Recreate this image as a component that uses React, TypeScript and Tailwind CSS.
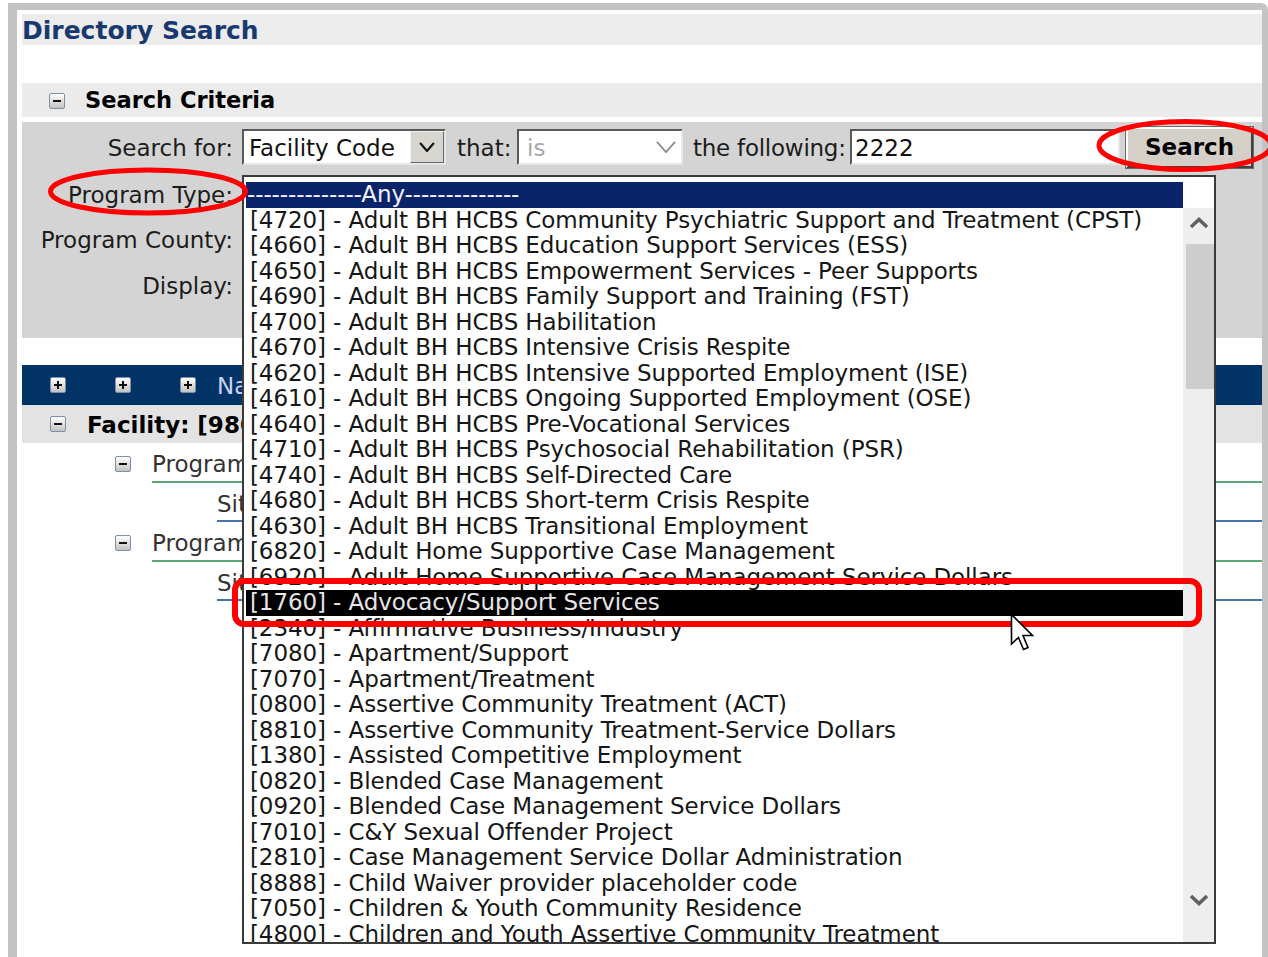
import React from "react";

const programTypes: string[] = [
  "[4720] - Adult BH HCBS Community Psychiatric Support and Treatment (CPST)",
  "[4660] - Adult BH HCBS Education Support Services (ESS)",
  "[4650] - Adult BH HCBS Empowerment Services - Peer Supports",
  "[4690] - Adult BH HCBS Family Support and Training (FST)",
  "[4700] - Adult BH HCBS Habilitation",
  "[4670] - Adult BH HCBS Intensive Crisis Respite",
  "[4620] - Adult BH HCBS Intensive Supported Employment (ISE)",
  "[4610] - Adult BH HCBS Ongoing Supported Employment (OSE)",
  "[4640] - Adult BH HCBS Pre-Vocational Services",
  "[4710] - Adult BH HCBS Psychosocial Rehabilitation (PSR)",
  "[4740] - Adult BH HCBS Self-Directed Care",
  "[4680] - Adult BH HCBS Short-term Crisis Respite",
  "[4630] - Adult BH HCBS Transitional Employment",
  "[6820] - Adult Home Supportive Case Management",
  "[6920] - Adult Home Supportive Case Management Service Dollars",
  "[1760] - Advocacy/Support Services",
  "[2340] - Affirmative Business/Industry",
  "[7080] - Apartment/Support",
  "[7070] - Apartment/Treatment",
  "[0800] - Assertive Community Treatment (ACT)",
  "[8810] - Assertive Community Treatment-Service Dollars",
  "[1380] - Assisted Competitive Employment",
  "[0820] - Blended Case Management",
  "[0920] - Blended Case Management Service Dollars",
  "[7010] - C&Y Sexual Offender Project",
  "[2810] - Case Management Service Dollar Administration",
  "[8888] - Child Waiver provider placeholder code",
  "[7050] - Children & Youth Community Residence",
  "[4800] - Children and Youth Assertive Community Treatment",
];

const SELECTED = "[1760] - Advocacy/Support Services";

function Toggle({ plus }: { plus?: boolean }) {
  return (
    <span className="inline-flex w-[16px] h-[16px] shrink-0 items-center justify-center rounded-[2px] border border-[#7d90a8] bg-linear-to-b from-[#ffffff] to-[#c3c3c3]">
      <svg width="10" height="10" viewBox="0 0 10 10">
        <rect x="1" y="4" width="8" height="2" fill="#111" />
        {plus && <rect x="4" y="1" width="2" height="8" fill="#111" />}
      </svg>
    </span>
  );
}

function Chevron({ color, w, h, sw }: { color: string; w: number; h: number; sw: number }) {
  return (
    <svg width={w} height={h} viewBox={`0 0 ${w} ${h}`}>
      <polyline
        points={`${sw / 2},${sw / 2} ${w / 2},${h - sw / 2} ${w - sw / 2},${sw / 2}`}
        fill="none"
        stroke={color}
        strokeWidth={sw}
      />
    </svg>
  );
}

function ChevronUp() {
  return (
    <svg width="20" height="12" viewBox="0 0 20 12">
      <polyline points="2,10 10,2.5 18,10" fill="none" stroke="#606060" strokeWidth="3.5" />
    </svg>
  );
}

function ChevronDown() {
  return (
    <svg width="20" height="12" viewBox="0 0 20 12">
      <polyline points="2,2 10,9.5 18,2" fill="none" stroke="#606060" strokeWidth="3.5" />
    </svg>
  );
}

function ProgramTypeList() {
  return (
    <div className="absolute left-[242px] top-[175px] w-[974px] h-[769px] border-2 border-[#3a3a3a] bg-white pt-[5px] pl-[2px] pr-0 flex flex-col overflow-hidden text-[23px] tracking-[-0.1px]">
      <div className="w-[937px] h-[25.5px] shrink-0 bg-[#0a246a] text-[#f0f0ff] leading-[25.5px] pl-[1px] whitespace-nowrap overflow-hidden">
        --------------Any--------------
      </div>
      <div className="flex flex-1 min-h-0">
        <div className="w-[937px] flex flex-col">
          {programTypes.map((label) => {
            const on = label === SELECTED;
            return (
              <div
                key={label}
                className={
                  on
                    ? "h-[25.5px] shrink-0 bg-black text-[#e6e6e6] leading-[25.5px] pl-[4px] whitespace-nowrap overflow-hidden"
                    : "h-[25.5px] shrink-0 text-[#161616] leading-[25.5px] pl-[4px] whitespace-nowrap overflow-hidden"
                }
              >
                {label}
              </div>
            );
          })}
        </div>
        <div className="w-[31px] bg-[#eeeeee] flex flex-col items-stretch">
          <div className="h-[30px] flex items-center justify-center">
            <ChevronUp />
          </div>
          <div className="mt-[6px] ml-[3px] h-[145px] bg-[#cdcdcd]" />
          <div className="flex-1" />
          <div className="h-[30px] mb-[27px] flex items-center justify-center">
            <ChevronDown />
          </div>
        </div>
      </div>
    </div>
  );
}

function Annotations() {
  return (
    <svg className="absolute inset-0 pointer-events-none" width="1268" height="957" viewBox="0 0 1268 957">
      <ellipse cx="148" cy="191.5" rx="97.5" ry="21.5" fill="none" stroke="#ff0000" strokeWidth="5" />
      <ellipse cx="1185" cy="145.5" rx="86" ry="24" fill="none" stroke="#ff0000" strokeWidth="5" />
      <rect x="235" y="581" width="964" height="43" rx="9" fill="none" stroke="#ff0000" strokeWidth="6" />
    </svg>
  );
}

function Pointer() {
  return (
    <svg className="absolute left-[1010px] top-[613px] pointer-events-none" width="26" height="42" viewBox="0 0 26 42">
      <path
        d="M1.5 1.5 V31 L8.5 24.5 L13.5 36.5 L18 34.5 L13 22.5 L22.5 22.5 Z"
        fill="#ffffff"
        stroke="#000000"
        strokeWidth="1.6"
        strokeLinejoin="miter"
      />
    </svg>
  );
}

export default function App() {
  return (
    <div className="relative w-[1268px] h-[957px] overflow-hidden bg-white pl-[8px] pt-[3px] font-['DejaVu_Sans',sans-serif] text-[#1c1c1c]">
      <div className="w-[1260px] h-[954px] border-l-[9px] border-t-[7px] border-r-[6px] border-[#c3c3c3] rounded-tr-[7px] pl-[5px] pt-[4px] flex flex-col">
        {/* page title */}
        <div className="h-[31px] bg-[#ececec] flex items-center pt-[2px]">
          <span className="text-[25px] font-bold text-[#18396f] leading-none">Directory Search</span>
        </div>

        {/* criteria header */}
        <div className="mt-[38px] h-[34px] bg-[#ebebeb] flex items-center pl-[27px] pt-[2px]">
          <Toggle />
          <span className="ml-[20px] text-[22.5px] font-bold text-black">Search Criteria</span>
        </div>

        {/* criteria form */}
        <div className="mt-[5px] h-[216px] bg-[#d4d4d4] pt-[7px] text-[23px]">
          <div className="flex items-center h-[36px]">
            <div className="w-[211px] text-right pt-[3px] whitespace-nowrap">Search for:</div>
            <div className="ml-[9px] w-[204px] h-[36px] flex bg-white border-2 border-t-[#585858] border-l-[#585858] border-r-[#e6e6e6] border-b-[#e6e6e6]">
              <span className="flex-1 pl-[5px] leading-[34px] text-[#111] whitespace-nowrap overflow-hidden">Facility Code</span>
              <span className="w-[34px] h-[32px] flex items-center justify-center bg-[#d8d6d0] border border-t-[#f2f2f2] border-l-[#f2f2f2] border-r-[#6a6a6a] border-b-[#6a6a6a]">
                <Chevron color="#111" w={16} h={10} sw={2.2} />
              </span>
            </div>
            <span className="ml-[11px] w-[52px] pt-[3px] whitespace-nowrap">that:</span>
            <div className="ml-[8px] w-[166px] h-[36px] flex items-center bg-white border-2 border-t-[#585858] border-l-[#585858] border-r-[#e6e6e6] border-b-[#e6e6e6]">
              <span className="flex-1 pl-[8px] pt-[3px] text-[#a8a8a8]">is</span>
              <span className="mr-[5px]">
                <Chevron color="#8c8c8c" w={20} h={12} sw={1.8} />
              </span>
            </div>
            <span className="ml-[10px] w-[150px] pt-[3px] whitespace-nowrap tracking-[-0.25px]">the following:</span>
            <div className="ml-[7px] w-[270px] h-[36px] flex items-center bg-white border-2 border-t-[#585858] border-l-[#585858] border-r-[#e6e6e6] border-b-[#e6e6e6]">
              <span className="pl-[3px] pt-[3px] text-[#111]">2222</span>
            </div>
            <button className="ml-[6px] w-[127px] h-[41px] bg-[#d4d0c8] border-2 border-t-[#ffffff] border-l-[#ffffff] border-r-[#404040] border-b-[#404040] outline outline-1 outline-[#6a6a6a] text-[23px] font-bold text-black">
              Search
            </button>
          </div>
          <div className="mt-[6px] flex items-center h-[46px]">
            <div className="w-[211px] text-right pt-[2px] whitespace-nowrap">Program Type:</div>
          </div>
          <div className="flex items-center h-[46px]">
            <div className="w-[211px] text-right pt-[1px] whitespace-nowrap">Program County:</div>
          </div>
          <div className="flex items-center h-[46px]">
            <div className="w-[211px] text-right whitespace-nowrap">Display:</div>
          </div>
        </div>

        {/* results header */}
        <div className="mt-[27px] h-[40px] bg-[#023366] flex items-center pl-[28px]">
          <Toggle plus />
          <span className="ml-[49px]">
            <Toggle plus />
          </span>
          <span className="ml-[49px]">
            <Toggle plus />
          </span>
          <span className="ml-[21px] pt-[3px] text-[23px] text-[#c9d2f4] whitespace-nowrap">Name</span>
        </div>

        {/* results */}
        <div className="h-[38px] bg-[#e3e3e3] flex items-center pl-[28px]">
          <Toggle />
          <span className="ml-[21px] pt-[3px] text-[23px] font-bold text-black whitespace-nowrap">Facility: [9801]</span>
        </div>

        <div className="h-[40px] flex pl-[93px] pt-[4px] text-[23px] text-[#333]">
          <div className="flex items-center pb-[2px]">
            <Toggle />
          </div>
          <div className="ml-[21px] flex-1 flex items-center pt-[1px] border-b-2 border-[#5aa676] whitespace-nowrap">Program</div>
        </div>
        <div className="h-[39px] flex pl-[195px] pt-[4px] text-[23px] text-[#333]">
          <div className="flex-1 flex items-center pt-[1px] border-b-2 border-[#4874ae] whitespace-nowrap">Site</div>
        </div>
        <div className="h-[40px] flex pl-[93px] pt-[4px] text-[23px] text-[#333]">
          <div className="flex items-center pb-[2px]">
            <Toggle />
          </div>
          <div className="ml-[21px] flex-1 flex items-center pt-[1px] border-b-2 border-[#5aa676] whitespace-nowrap">Program</div>
        </div>
        <div className="h-[39px] flex pl-[195px] pt-[4px] text-[23px] text-[#333]">
          <div className="flex-1 flex items-center pt-[1px] border-b-2 border-[#4874ae] whitespace-nowrap">Site</div>
        </div>
      </div>

      <ProgramTypeList />
      <Annotations />
      <Pointer />
    </div>
  );
}
